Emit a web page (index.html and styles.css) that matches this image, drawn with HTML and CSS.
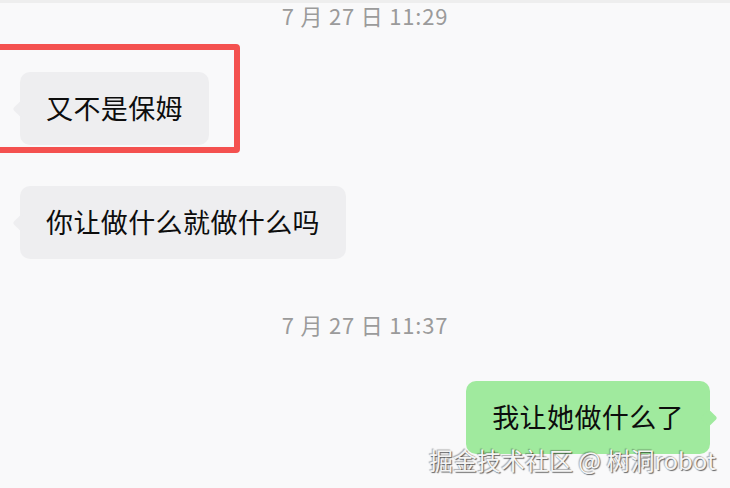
FILE: index.html
```html
<!DOCTYPE html>
<html lang="zh-CN">
<head>
<meta charset="utf-8">
<link rel="stylesheet" href="styles.css">
</head>
<body>
<div class="screen">
  <div class="top-line"></div>
  <div class="chat">
    <div class="time time-first">7 月 27 日 11:29</div>
    <div class="row row-left row-first">
      <div class="bubble bubble-in">又不是保姆</div>
    </div>
    <div class="row row-left row-second">
      <div class="bubble bubble-in">你让做什么就做什么吗</div>
    </div>
    <div class="time time-second">7 月 27 日 11:37</div>
    <div class="row row-right row-third">
      <div class="bubble bubble-out">我让她做什么了</div>
    </div>
  </div>
  <div class="highlight"></div>
  <div class="watermark">掘金技术社区 @ 树洞robot</div>
</div>
</body>
</html>
```
FILE: styles.css
```css
html, body {
  margin: 0;
  padding: 0;
}
body {
  background: #f9f9fa;
  font-family: "Noto Sans CJK SC", "Noto Sans", sans-serif;
}
.screen {
  position: relative;
  width: 730px;
  height: 488px;
  overflow: hidden;
  background: #f9f9fa;
}
.top-line {
  height: 3px;
  background: #eeeeee;
}
.chat {
  display: flex;
  flex-direction: column;
  padding: 0 20px;
}
.time {
  text-align: center;
  font-size: 22px;
  line-height: 24px;
  height: 24px;
  color: #9b9b9b;
  letter-spacing: 0.8px;
}
.time-second {
  margin-top: 53px;
}
.row {
  display: flex;
}
.row-left {
  justify-content: flex-start;
}
.row-right {
  justify-content: flex-end;
}
.row-first {
  margin-top: 45px;
}
.row-second {
  margin-top: 41px;
}
.row-third {
  margin-top: 45px;
}
.bubble {
  position: relative;
  font-size: 27px;
  letter-spacing: 0.4px;
  line-height: 33px;
  padding: 19px 26px 21px;
  border-radius: 10px;
  color: #0d0d0d;
}
.bubble-in {
  background: #eeeef0;
}
.bubble-out {
  background: #a0ea9e;
}
.bubble-in::before,
.bubble-out::after {
  content: "";
  position: absolute;
  top: 50%;
  width: 12px;
  height: 12px;
  border-radius: 2px;
  transform: translateY(-50%) rotate(45deg);
}
.bubble-in::before {
  left: -5px;
  background: #eeeef0;
}
.bubble-out::after {
  right: -5px;
  background: #a0ea9e;
}
.highlight {
  position: absolute;
  left: -6px;
  top: 44px;
  width: 234px;
  height: 97px;
  border: 6px solid #f4514f;
  border-radius: 4px;
}
.watermark {
  position: absolute;
  right: 14px;
  bottom: 15px;
  font-size: 24px;
  line-height: 27px;
  color: #f4f4f4;
  text-shadow: 1px 1px 1px rgba(0, 0, 0, 0.6), -1px -1px 1px rgba(0, 0, 0, 0.3);
}
```
